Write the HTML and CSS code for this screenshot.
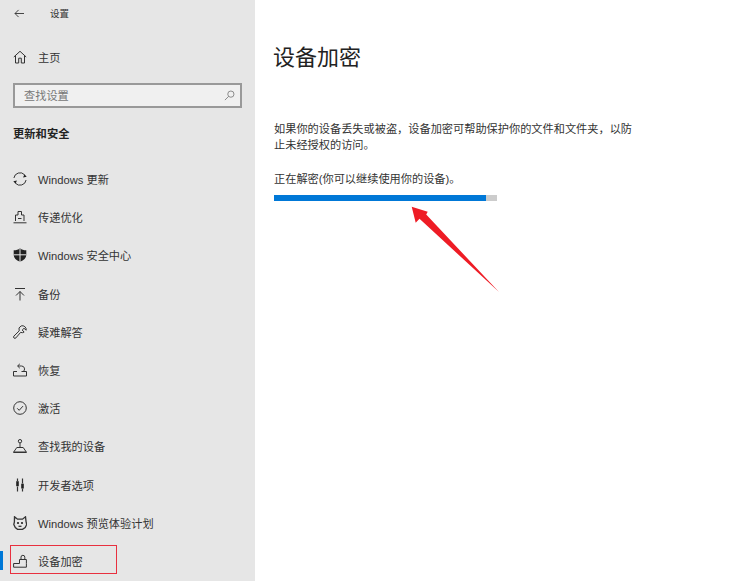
FILE: index.html
```html
<!DOCTYPE html>
<html lang="zh-CN">
<head>
<meta charset="utf-8">
<title>设置</title>
<link rel="stylesheet" href="styles.css">
</head>
<body>
<div class="app">
  <aside class="sidebar">
    <div class="topbar">
      <svg class="back" viewBox="0 0 12 10"><path d="M11 5H1M5 1L1 5l4 4"/></svg>
      <span class="app-title">设置</span>
    </div>
    <div class="home">
      <svg class="icon" viewBox="0 0 14 14"><path d="M.8 7L7 1.300 13.200 7M2.500 5.600V13h3.200V8.200h2.600V13h3.200V5.600"/></svg>
      <span>主页</span>
    </div>
    <div class="search">
      <span>查找设置</span>
      <svg class="search-icon" viewBox="0 0 12 12"><circle cx="7.500" cy="4.500" r="3.400"/><path d="M5 7L1 11"/></svg>
    </div>
    <div class="section">更新和安全</div>
    <nav class="nav">
      <div class="item">
        <svg class="icon" viewBox="0 0 14 14"><path d="M.9 6A6.200 6.200 0 0 1 11.600 2.800M13.100 8A6.200 6.200 0 0 1 2.400 11.200"/><path class="solid" d="M.3 9.300l3.600-.9-1.300 3.400zM13.700 4.700l-3.600.9 1.300-3.400z"/></svg>
        <span>Windows 更新</span>
      </div>
      <div class="item">
        <svg class="icon" viewBox="0 0 14 14"><path d="M2.500 11V5H5V1.500h3.500V5H11v6M.5 12.800h13"/><path d="M5 8.500h3.500"/></svg>
        <span>传递优化</span>
      </div>
      <div class="item">
        <svg class="icon" viewBox="0 0 14 14"><path class="solid" d="M7 .3c1.600 1.400 3.800 2 6.300 2v4.700c0 3-2.400 5.300-6.300 6.700C3.100 12.300.7 10 .7 7V2.300c2.500 0 4.700-.6 6.300-2z"/><path class="cut" d="M7 .5v13.500M.7 6.800h12.600"/></svg>
        <span>Windows 安全中心</span>
      </div>
      <div class="item">
        <svg class="icon" viewBox="0 0 14 14"><path d="M2 1.500h10M7 13.500V4.500M3 8.500l4-4 4 4"/></svg>
        <span>备份</span>
      </div>
      <div class="item">
        <svg class="icon" viewBox="0 0 14 14"><path d="M8.200 .9a3.900 3.900 0 0 1 5 4.300L11 3.300 9.200 5l1.900 2.100a3.900 3.900 0 0 1-3.500.3L2.900 12.900a1.300 1.300 0 0 1-2-1.800L6.200 5.900A3.900 3.900 0 0 1 8.200 .9z"/></svg>
        <span>疑难解答</span>
      </div>
      <div class="item">
        <svg class="icon" viewBox="0 0 14 14"><path d="M4.800 3h3.700a3 3 0 0 1 1.700 5.500M6.800 .9L4.600 3l2.200 2.200M.5 8.500v4.500h13V8.500H8.500M.5 8.500h3.500"/></svg>
        <span>恢复</span>
      </div>
      <div class="item">
        <svg class="icon" viewBox="0 0 14 14"><circle cx="7" cy="7" r="6.300"/><path d="M4.200 7.300l2 2 3.800-4.200"/></svg>
        <span>激活</span>
      </div>
      <div class="item">
        <svg class="icon" viewBox="0 0 14 14"><circle cx="7" cy="2.200" r="1.700"/><path d="M7 3.900V8.500M3.800 8.500h6.400L13.300 13H.7zM.3 13.500h13.400"/></svg>
        <span>查找我的设备</span>
      </div>
      <div class="item">
        <svg class="icon" viewBox="0 0 14 14"><path class="thick" d="M4.500 .5v2.500M4.500 8.500v5M9.500 .5V5.500M9.500 10.500v3"/><rect class="solid" x="3.200" y="3.200" width="2.600" height="5"/><rect class="solid" x="8.200" y="5.700" width="2.600" height="4.800"/></svg>
        <span>开发者选项</span>
      </div>
      <div class="item">
        <svg class="icon heavy" viewBox="0 0 14 14"><path d="M1.500 .8l3 2.400h5l3-2.400.6 5 .6 2.700-1.500 3L9.500 13.300h-5L2.300 11.500.8 8.500 1.400 5.800z"/><circle class="solid" cx="5" cy="7" r="1.100"/><circle class="solid" cx="9" cy="7" r="1.100"/><path d="M5.500 10.300h3"/></svg>
        <span>Windows 预览体验计划</span>
      </div>
      <div class="item current">
        <svg class="icon" viewBox="0 0 14 14"><path d="M6.500 9.500H.6V13.200H13.400V9.500M6.500 9.500V5.500H13.400V9.500M8 5.500V3.200a1.900 1.900 0 0 1 3.800 0V5.500"/></svg>
        <span>设备加密</span>
      </div>
    </nav>
  </aside>
  <main class="content">
    <h1 class="title">设备加密</h1>
    <p class="desc">如果你的设备丢失或被盗，设备加密可帮助保护你的文件和文件夹，以防止未经授权的访问。</p>
    <p class="status">正在解密(你可以继续使用你的设备)。</p>
    <div class="progress"><div class="bar" style="width:95%"></div></div>
  </main>
</div>
<div class="mark-box"></div>
<svg class="arrow" viewBox="0 0 100 100"><polygon points="1.700,.7 5.700,16.700 9.500,12.800 89,86 16.200,8.500 17.700,5.700"/></svg>
</body>
</html>
```
FILE: styles.css
```css
* { box-sizing: border-box; }
html, body { margin: 0; height: 100%; overflow: hidden; background: #fff; }
body {
  font-family: "Liberation Sans", "Noto Sans CJK SC", sans-serif;
  font-size: 11.2px;
  color: #333;
  position: relative;
}
.app { display: flex; height: 581px; }
.sidebar {
  width: 255px;
  flex: none;
  background: #e6e6e6;
  padding-top: 5px;
}
.topbar { display: flex; align-items: center; height: 16px; padding-left: 14px; }
.back { width: 11px; height: 9px; margin-right: 25px; fill: none; stroke: #333; stroke-width: 1; }
.app-title { font-size: 9.500px; }
.home {
  display: flex;
  align-items: center;
  gap: 11px;
  height: 20px;
  margin-top: 26px;
  padding-left: 13px;
}
.icon { width: 14px; height: 14px; flex: none; fill: none; stroke: #333; stroke-width: 1; }
.icon .solid { fill: #222; stroke: none; }
.icon .cut { stroke: #e6e6e6; stroke-width: 1; }
.icon .thick { stroke-width: 1.200; }
.heavy { stroke-width: 1.300; }
.search {
  display: flex;
  align-items: center;
  justify-content: space-between;
  width: 229px;
  height: 25px;
  margin: 16px 0 0 13px;
  padding: 0 5px 0 9px;
  background: #f0f0f0;
  border: 2px solid #999;
  color: #777;
}
.search span { position: relative; top: -1px; }
.search-icon { width: 11px; height: 11px; fill: none; stroke: #777; stroke-width: .9; }
.section { margin-top: 18px; padding-left: 13px; font-weight: 700; font-size: 11.300px; color: #222; height: 16px; line-height: 16px; }
.nav { display: flex; flex-direction: column; margin-top: 18px; }
.item {
  display: flex;
  align-items: center;
  gap: 11px;
  height: 38.200px;
  padding-left: 13px;
  position: relative;
}
.current::before {
  content: "";
  position: absolute;
  left: 0;
  top: 9px;
  width: 3px;
  height: 19px;
  background: #0078d7;
}
.content { flex: 1; padding: 45px 0 0 19px; }
.title { margin: 0 0 0 -1px; font-size: 22px; font-weight: 400; line-height: 26px; color: #222; }
.desc { margin: 50px 0 0; width: 358px; line-height: 16px; }
.status { margin: 18px 0 0; line-height: 16px; }
.progress { width: 223px; height: 6px; margin-top: 8px; background: #ccc; }
.bar { height: 100%; background: #0078d7; }
.mark-box {
  position: absolute;
  left: 10px;
  top: 545px;
  width: 107px;
  height: 29px;
  border: 1px solid #e8303f;
}
.arrow {
  position: absolute;
  left: 410px;
  top: 206px;
  width: 100px;
  height: 100px;
  fill: #ee1c25;
}
```
